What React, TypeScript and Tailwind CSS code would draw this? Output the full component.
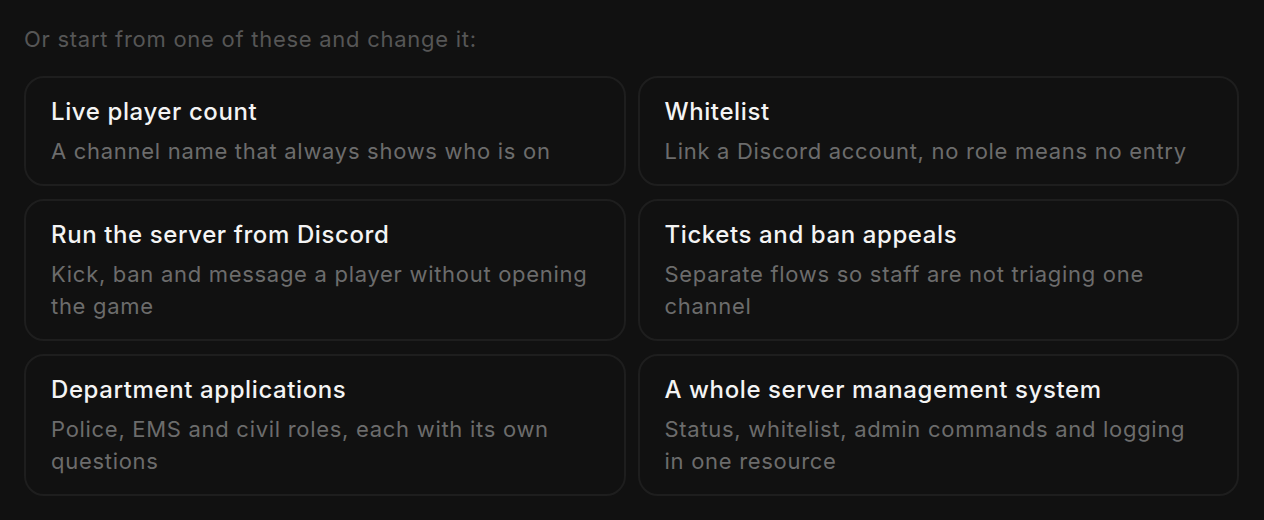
const items = [
  { title: "Live player count", desc: "A channel name that always shows who is on" },
  { title: "Whitelist", desc: "Link a Discord account, no role means no entry" },
  { title: "Run the server from Discord", desc: "Kick, ban and message a player without opening the game" },
  { title: "Tickets and ban appeals", desc: "Separate flows so staff are not triaging one channel" },
  { title: "Department applications", desc: "Police, EMS and civil roles, each with its own questions" },
  { title: "A whole server management system", desc: "Status, whitelist, admin commands and logging in one resource" },
]

export default function App() {
  return (
    <div className="min-h-[520px] bg-[#111111] pl-6 pr-[25px] pt-6 pb-6 font-['Inter',sans-serif]">
      <p className="text-[22px] leading-[30px] tracking-[0.033em] text-[#565656]">Or start from one of these and change it:</p>
      <div className="mt-[22px] grid grid-cols-2 gap-x-3 gap-y-[13px]">
        {items.map((it) => (
          <div key={it.title} className="rounded-[20px] border-2 border-[#1e1e1e] bg-[#111111] pl-[25px] pr-[28px] py-[17px]">
            <div className="text-[24px] leading-[34px] font-medium tracking-[0.025em] text-[#f4f4f4]">{it.title}</div>
            <div className="mt-[6px] text-[22px] leading-[32px] tracking-[0.032em] text-[#6c6c6c]">{it.desc}</div>
          </div>
        ))}
      </div>
    </div>
  )
}
